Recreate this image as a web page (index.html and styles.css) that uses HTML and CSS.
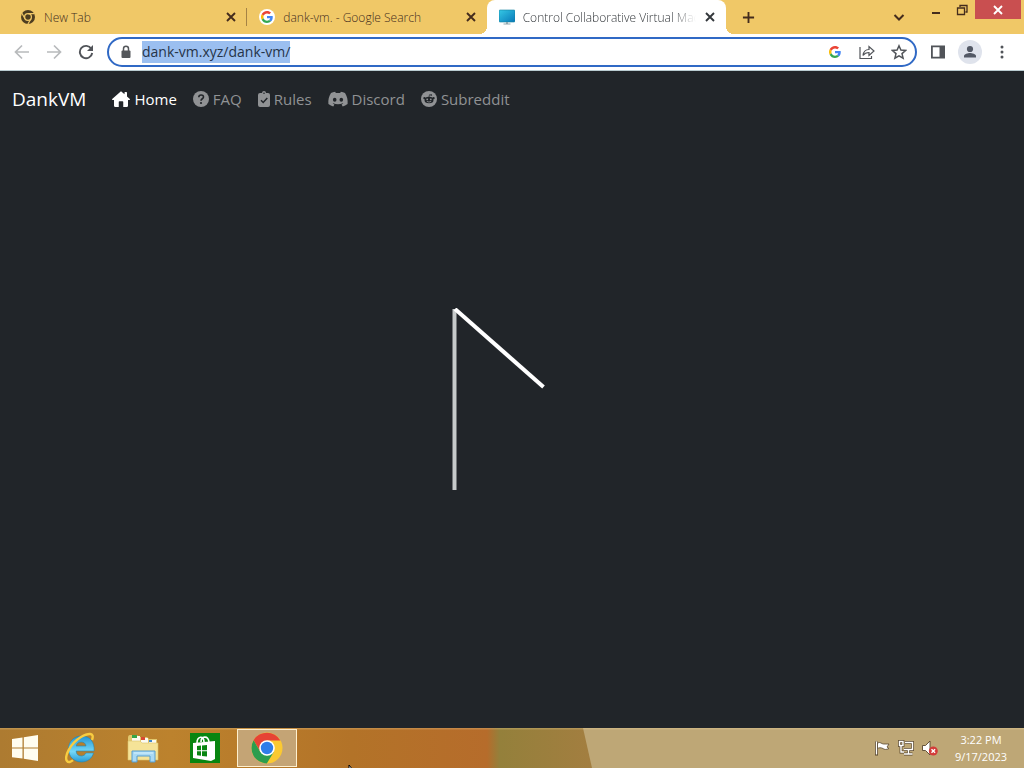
FILE: index.html
```
<!DOCTYPE html>
<html lang="en">
<head>
<meta charset="utf-8">
<title>Control Collaborative Virtual Machines</title>
<link rel="stylesheet" href="styles.css">
</head>
<body>
<svg class="defs" width="0" height="0" aria-hidden="true">
  <symbol id="google" viewBox="0 0 48 48">
    <path fill="#ea4335" d="M24 9.500c3.500 0 6.700 1.200 9.200 3.600l6.900-6.900C35.900 2.400 30.500 0 24 0 14.600 0 6.500 5.400 2.600 13.200l8 6.200C12.400 13.700 17.700 9.500 24 9.500z"/>
    <path fill="#4285f4" d="M47 24.600c0-1.600-.2-3.100-.4-4.600H24v9h12.900c-.6 3-2.300 5.500-4.700 7.200l7.700 6C44.400 38 47 31.800 47 24.600z"/>
    <path fill="#fbbc05" d="M10.500 28.600A14.500 14.500 0 0 1 10.500 19.400l-7.900-6.200a24 24 0 0 0 0 21.600z"/>
    <path fill="#34a853" d="M24 48c6.500 0 11.900-2.100 15.900-5.800l-7.700-6c-2.200 1.500-4.900 2.300-8.200 2.300-6.300 0-11.600-4.200-13.500-9.900l-7.900 6.200C6.500 42.600 14.600 48 24 48z"/>
  </symbol>
  <symbol id="close" viewBox="0 0 12 12"><path d="M2 2l8 8M10 2l-8 8" fill="none" stroke="currentColor" stroke-width="1.900"/></symbol>
</svg>
<div class="window">
  <header class="tabstrip">
    <div class="tabs">
      <div class="tab tab-first">
        <svg class="favicon" viewBox="0 0 16 16"><circle cx="8" cy="8" r="7" fill="#4d3d20"/><circle cx="8" cy="8" r="3.400" fill="#4d3d20" stroke="#f0c867" stroke-width="1.300"/><path d="M8 4.600h6.300M5 9.700L1.900 4.300M11 9.700L7.900 15" stroke="#f0c867" stroke-width="1.200"/></svg>
        <span class="tab-title">New Tab</span>
        <button class="tab-close" aria-label="Close New Tab"><svg><use href="#close"/></svg></button>
      </div>
      <div class="tab">
        <span class="favicon favicon-round"><svg><use href="#google"/></svg></span>
        <span class="tab-title">dank-vm. - Google Search</span>
        <button class="tab-close" aria-label="Close Google Search"><svg><use href="#close"/></svg></button>
      </div>
      <div class="tab tab-active">
        <svg class="favicon" viewBox="0 0 16 16"><defs><linearGradient id="screen" x2="1" y2="1"><stop stop-color="#35c8e5"/><stop offset="1" stop-color="#0878b8"/></linearGradient></defs><rect y="1" width="16" height="12" rx="1" fill="url(#screen)" stroke="#137f9d" stroke-width=".6"/><path d="M7 13h2v1.500H7zM4.500 14.500h7v1h-7z" fill="#8fa6ad"/></svg>
        <span class="tab-title">Control Collaborative Virtual Machines</span>
        <button class="tab-close" aria-label="Close DankVM"><svg><use href="#close"/></svg></button>
      </div>
    </div>
    <button class="new-tab" aria-label="New tab"><svg viewBox="0 0 14 14"><path d="M7 1v12M1 7h12" stroke="currentColor" stroke-width="2"/></svg></button>
    <div class="window-controls">
      <button class="tab-search" aria-label="Search tabs"><svg viewBox="0 0 12 12"><path d="M1.500 4L6 8.500 10.500 4" fill="none" stroke="currentColor" stroke-width="2"/></svg></button>
      <button class="win-btn" aria-label="Minimize"><svg viewBox="0 0 12 12"><path d="M2 9h8" stroke="currentColor" stroke-width="2"/></svg></button>
      <button class="win-btn" aria-label="Restore"><svg viewBox="0 0 12 12"><path d="M1.500 4h7v6.500h-7zM1 4.200h8M4 3V1.500h7V8H9.500" fill="none" stroke="currentColor" stroke-width="1.300"/></svg></button>
      <button class="win-close" aria-label="Close window"><svg><use href="#close"/></svg></button>
    </div>
  </header>

  <div class="toolbar">
    <button class="tool muted" aria-label="Back"><svg viewBox="0 0 16 16"><path d="M15 8H2M8 1.500L1.500 8 8 14.500" fill="none" stroke="currentColor" stroke-width="1.700"/></svg></button>
    <button class="tool muted" aria-label="Forward"><svg viewBox="0 0 16 16"><path d="M1 8h13M8 1.500L14.500 8 8 14.500" fill="none" stroke="currentColor" stroke-width="1.700"/></svg></button>
    <button class="tool" aria-label="Reload"><svg viewBox="0 0 16 16"><path d="M13.300 4.700A6.200 6.200 0 1 0 14.200 9" fill="none" stroke="currentColor" stroke-width="1.900"/><path d="M15 1v6H9z" fill="currentColor"/></svg></button>
    <div class="omnibox">
      <svg class="lock" viewBox="0 0 12 14"><path d="M3.500 6V3.800a2.500 2.500 0 0 1 5 0V6" fill="none" stroke="#54575b" stroke-width="1.500"/><rect x="1.500" y="5.500" width="9" height="7.500" rx="1" fill="#54575b"/></svg>
      <input class="url" type="text" aria-label="Address" value="dank-vm.xyz/dank-vm/" autofocus>
      <button class="tool" aria-label="Search with Google"><svg class="google-small"><use href="#google"/></svg></button>
      <button class="tool" aria-label="Share"><svg viewBox="0 0 16 16" fill="none" stroke="currentColor" stroke-width="1.200"><path d="M1 3v11.500h11.500V12M4 11.500c.5-4 2.500-6 6-6V2.500L15 7l-5 4.500V8.500c-2.800 0-4.500.9-6 3z"/></svg></button>
      <button class="tool" aria-label="Bookmark"><svg viewBox="0 0 16 16"><path d="M8 1.800l1.900 4.300 4.700.4-3.600 3.100 1.100 4.600L8 11.800l-4.100 2.400L5 9.600 1.400 6.500l4.700-.4z" fill="none" stroke="currentColor" stroke-width="1.500"/></svg></button>
    </div>
    <button class="tool" aria-label="Side panel"><svg viewBox="0 0 16 16"><path d="M1.900 2.400h12.200v11.200H1.900z" fill="none" stroke="currentColor" stroke-width="1.800"/><path d="M9.500 2h5v12h-5z" fill="currentColor"/></svg></button>
    <button class="tool profile" aria-label="Profile"><svg viewBox="0 0 16 16" fill="#535966"><circle cx="8" cy="5" r="3.100"/><path d="M2 13.500v-1.500c0-2 4-3 6-3s6 1 6 3v1.500z"/></svg></button>
    <button class="tool" aria-label="Menu"><svg viewBox="0 0 16 16" fill="currentColor"><circle cx="8" cy="3" r="1.500"/><circle cx="8" cy="8" r="1.500"/><circle cx="8" cy="13" r="1.500"/></svg></button>
  </div>

  <div class="page">
    <nav class="navbar">
      <a class="brand" href="#">DankVM</a>
      <a class="nav-link active" href="#"><svg class="icon-wide" viewBox="0 0 576 512"><path fill="currentColor" d="M288 10L5 256q-8 12 0 22 8 12 27 10h32v180q0 44 44 44h108V352q0-24 24-24h96q24 0 24 24v160h108q44 0 44-44V288h32q19 2 27-10 8-10 0-22L480 176V55q0-23-23-23h-35q-22 0-22 23v50z"/></svg>Home</a>
      <a class="nav-link" href="#"><svg viewBox="0 0 16 16"><circle cx="8" cy="8" r="8" fill="currentColor"/><path d="M5.800 6.200c0-3 4.700-2.900 4.700-.2C10.500 7.800 8 7.700 8 9.700" fill="none" stroke="#212529" stroke-width="1.600"/><circle cx="8" cy="12" r="1.100" fill="#212529"/></svg>FAQ</a>
      <a class="nav-link" href="#"><svg class="icon-narrow" viewBox="0 0 12 16"><path fill="currentColor" d="M2 2h2a2 2 0 0 1 4 0h2q2 0 2 2v10q0 2-2 2H2q-2 0-2-2V4q0-2 2-2z"/><circle cx="6" cy="2.300" r=".8" fill="#212529"/><path d="M3 9.300l2.200 2.200L9.300 7" fill="none" stroke="#212529" stroke-width="1.500"/></svg>Rules</a>
      <a class="nav-link" href="#"><svg class="icon-discord" viewBox="0 0 20 16"><path fill="currentColor" d="M7.200.8C5.500 1 4.300 1.400 3 2 1 5.200 0 8.700.4 13c1.700 1.200 3.200 1.900 4.900 2.400l1.100-1.900-1.700-.9.500-.4c3 1.400 6.600 1.400 9.600 0l.5.4-1.700.9 1.100 1.900c1.700-.5 3.200-1.200 4.900-2.400.4-4.300-.6-7.800-2.600-11-1.300-.6-2.500-1-4.200-1.200l-.6 1.300a15 15 0 0 0-4.400 0z"/><ellipse cx="6.700" cy="8.700" rx="1.800" ry="2" fill="#212529"/><ellipse cx="13.300" cy="8.700" rx="1.800" ry="2" fill="#212529"/></svg>Discord</a>
      <a class="nav-link" href="#"><svg viewBox="0 0 16 16"><circle cx="8" cy="8" r="8" fill="currentColor"/><g fill="#212529"><ellipse cx="8" cy="9" rx="4.500" ry="3.200"/><circle cx="3.400" cy="7.200" r="1.100"/><circle cx="12.600" cy="7.200" r="1.100"/><circle cx="10.300" cy="4" r=".8"/></g><path d="M8 6l.5-2.300 1.800.4" fill="none" stroke="#212529" stroke-width=".7"/><path d="M5.800 10.300q2.200 1.500 4.400 0" fill="none" stroke="currentColor" stroke-width=".8"/><circle cx="6.200" cy="8.300" r=".9" fill="currentColor"/><circle cx="9.800" cy="8.300" r=".9" fill="currentColor"/></svg>Subreddit</a>
    </nav>
    <main class="stage">
      <svg class="loader" viewBox="0 0 180 240" role="img" aria-label="Loading"><path d="M32.500 1v181" stroke="#c6caca" stroke-width="4"/><path d="M33 1l88.500 78" stroke="#fff" stroke-width="4"/></svg>
    </main>
  </div>

  <footer class="taskbar">
    <svg class="wallpaper" viewBox="0 0 1024 40" preserveAspectRatio="none" aria-hidden="true"><defs><linearGradient id="wood"><stop stop-color="#ad7b31"/><stop offset=".35" stop-color="#bc822d"/><stop offset=".72" stop-color="#b37328"/><stop offset="1" stop-color="#b66c2b"/></linearGradient><linearGradient id="olive"><stop stop-color="#b66c2b"/><stop offset=".12" stop-color="#94803b"/><stop offset="1" stop-color="#a37e40"/></linearGradient></defs><path fill="url(#wood)" d="M0 0h488v40H0z"/><path fill="url(#olive)" d="M487 0h105v40H487z"/><path fill="#bea776" d="M583 0h441v40H592z"/><path fill="#ffe6ad" opacity=".22" d="M0 0h1024v1.500H0z"/></svg>
    <button class="task start" aria-label="Start"><svg viewBox="0 0 28 28" fill="#fffdf0"><path d="M1 5l10.500-1.600v10H1zM12.800 3.200L27 1v12.400H12.800zM1 14.600h10.500v10L1 23.200zM12.800 14.600H27V27l-14.200-2.200z"/></svg></button>
    <button class="task" aria-label="Internet Explorer"><svg viewBox="0 0 32 32"><defs><linearGradient id="ie" x2="0" y2="1"><stop stop-color="#2494d3"/><stop offset=".6" stop-color="#74d8f8"/><stop offset="1" stop-color="#2699d3"/></linearGradient></defs><path fill="url(#ie)" stroke="#2187b4" stroke-width=".6" d="M16.500 4C9 4 3.500 9.500 3.500 17S9 30 16.500 30c6 0 10.500-3.500 12-9h-7.500c-1 2-2.500 3-4.700 3-3 0-5-1.800-5.200-5h18C29.700 10 25 4 16.500 4zM11.200 14c.5-2.700 2.300-4 5-4 2.600 0 4.500 1.300 4.800 4z"/><path fill="none" stroke="#f8cc40" stroke-width="2.400" d="M27 8c3-8-4-7-11-3C5 11.500-1 25 2 29c1.300 1.800 4 1 6-.8"/></svg></button>
    <button class="task" aria-label="File Explorer"><svg viewBox="0 0 32 32"><path fill="#e1c86e" d="M1 6q0-3 2-3h7l2 2h8l2 2h8v20H1z"/><path fill="#fbfaf0" d="M5 4h8v6H5zM14 6h7v5h-7zM22 8h7v4h-7z"/><path fill="#36a548" d="M5 3h5v3H5z"/><path fill="#d94832" d="M14 5h4v3h-4z"/><path fill="#4087ca" d="M22 8h3v2h-3z"/><path fill="#f5e398" stroke="#dac26b" stroke-width=".6" d="M1 9h12l2 2h16v17H1z"/><path fill="#a9d9f4" stroke="#579dce" d="M5 19h23v11h-5v-6H10v6H5z"/><path stroke="#d6f2ff" d="M7 21h19"/></svg></button>
    <button class="task" aria-label="Store"><svg viewBox="0 0 32 32"><path fill="#088510" d="M1 1h30v30H1z"/><path fill="none" stroke="#fff" stroke-width="1.600" d="M8 11c0-7 7-8 7-1M12 10c0-6 7-7 8 0"/><path fill="#fff" d="M4 11l22-2v18l-4 2-18-3z"/><path fill="#088510" d="M8 14l4-.4v4.600H8zM13 13.500l5-.5v5.200h-5zM8 19.200h4v4.600l-4-.5zM13 19.200h5v5.400l-5-.6z"/></svg></button>
    <button class="task task-active" aria-label="Google Chrome"><svg viewBox="0 0 32 32"><circle cx="16" cy="16" r="15.500" fill="#fbc932"/><path fill="#e64335" d="M2.600 8.200A15.500 15.500 0 0 1 29.400 8.500H16L9 19z"/><path fill="#2b9d4e" d="M2.600 8.200A15.500 15.500 0 0 0 15.800 31.500L22.800 20 16 23.500 9.300 19.800z"/><circle cx="16" cy="16" r="7.800" fill="#fff"/><circle cx="16" cy="16" r="6.200" fill="#2f7de8"/></svg></button>
    <div class="tray">
      <svg viewBox="0 0 16 16"><path d="M2.500 1.500v14" stroke="#57452c" stroke-width="3"/><path d="M2.500 1.500v13" stroke="#fff" stroke-width="1.400"/><path d="M3.500 3c3-1.500 4 1 6 1h5.500l-2 3 2 1.500c-3 1.500-5 1-6 0-2-1-4-1-5.500 0z" fill="#fff" stroke="#57452c" stroke-width=".8"/></svg>
      <svg viewBox="0 0 16 16" fill="none"><g stroke="#57452c" stroke-width="2.800"><path d="M7 2.500h7.500v7H6M10.500 10v4M6 14h8.500M1.500 1.500h3.500v4H1.500zM3 6v6h3"/></g><g stroke="#fff" stroke-width="1.400"><path d="M7 2.500h7.500v7H6M10.500 10v4M6 14h8.500M1.500 1.500h3.500v4H1.500zM3 6v6h3"/></g></svg>
      <svg viewBox="0 0 16 16"><path d="M.5 5.500h3L8 1v14l-4.500-4.500h-3z" fill="#fff" stroke="#57452c" stroke-width=".9"/><circle cx="11.300" cy="11" r="4.500" fill="#d33b39"/><path d="M9.500 9.200l3.600 3.600m0-3.600l-3.600 3.600" stroke="#fff" stroke-width="1.400"/></svg>
    </div>
    <div class="clock"><span>3:22 PM</span><span>9/17/2023</span></div>
    <svg class="cursor" viewBox="0 0 8 12" aria-hidden="true"><path d="M1 1v10l2.500-2.500H7z" fill="#fff" stroke="#000"/></svg>
  </footer>
</div>
<script src="main.js"></script>
</body>
</html>
```

FILE: main.js
```
const address = document.querySelector(".url");
address.focus();
address.select();
```

FILE: styles.css
```
* { box-sizing: border-box; }
body { margin: 0; font-family: "Open Sans", "Noto Sans", sans-serif; }
button { border: 0; padding: 0; background: none; color: inherit; display: flex; align-items: center; justify-content: center; flex: none; }
svg { display: block; flex: none; }
.defs { position: absolute; }
.window { display: flex; flex-direction: column; height: 100vh; overflow: hidden; }

.tabstrip { display: flex; height: 34px; flex: none; background: #f0c867; color: #442c1d; }
.tabs { display: flex; flex: 0 1 718px; min-width: 0; margin-left: 8px; }
.tab { display: flex; align-items: center; flex: 1; min-width: 0; gap: 8px; padding: 0 10px 0 12px; font-size: 12px; font-weight: 300; }
.tab-first { background: linear-gradient(#a58345, #a58345) right center / 1px 18px no-repeat; }
.tab-active { background: #fff; border-radius: 8px 8px 0 0; color: #33373b; position: relative; }
.tab-active::before, .tab-active::after { content: ""; position: absolute; bottom: 0; width: 8px; height: 8px; }
.tab-active::before { right: 100%; background: radial-gradient(circle at 0 0, transparent 8px, #fff 8px); }
.tab-active::after { left: 100%; background: radial-gradient(circle at 100% 0, transparent 8px, #fff 8px); }
.favicon { width: 16px; height: 16px; flex: none; }
.favicon-round { display: flex; align-items: center; justify-content: center; background: #fff; border-radius: 50%; }
.favicon-round svg { width: 12px; height: 12px; }
.tab-title { flex: 1; min-width: 0; overflow: hidden; white-space: nowrap; }
.tab-active .tab-title { mask-image: linear-gradient(to right, #000 86%, transparent); }
.tab-close svg { width: 12px; height: 12px; }
.new-tab { width: 28px; margin-left: 8px; }
.new-tab svg { width: 13px; height: 13px; }
.window-controls { display: flex; align-items: flex-start; margin: 0 3px 0 auto; }
.tab-search { width: 24px; height: 34px; margin-right: 12px; }
.tab-search svg { width: 12px; height: 12px; }
.win-btn { width: 26px; height: 19px; }
.win-btn svg { width: 12px; height: 12px; }
.win-close { width: 46px; height: 19px; background: #c94f50; color: #fff; }
.win-close svg { width: 12px; height: 12px; }

.toolbar { display: flex; align-items: center; gap: 8px; flex: none; height: 37px; padding: 0 10px; background: #fff; border-bottom: 1px solid #b9cbd0; color: #515459; }
.tool { width: 24px; height: 24px; }
.tool svg { width: 16px; height: 16px; }
.muted { color: #b8babc; }
.omnibox { display: flex; align-items: center; gap: 8px; flex: 1; min-width: 0; height: 30px; margin: 0 1px; padding: 0 4px 0 11px; border: 2px solid #3069c5; border-radius: 16px; }
.lock { width: 12px; height: 14px; }
.url { flex: 1; min-width: 0; border: 0; outline: 0; padding: 0; margin-left: 2px; background: none; color: #263448; font: 14px/22px "Open Sans", "Noto Sans", sans-serif; }
.url::selection { background: #9bbff0; color: #263448; }
.tool .google-small { width: 12px; height: 12px; }
.profile { border-radius: 50%; background: #dfe3ec; }
.profile svg { width: 16px; height: 16px; }

.page { display: flex; flex-direction: column; flex: 1; min-height: 0; background: #212529; }
.navbar { display: flex; align-items: center; gap: 16px; height: 56px; padding: 0 12px; color: #909294; font-size: 15px; }
.navbar a { color: inherit; text-decoration: none; }
.navbar .brand { color: #fff; font-size: 19px; margin-right: 10px; }
.nav-link { display: flex; align-items: center; gap: 4px; }
.navbar .active { color: #fff; }
.nav-link svg { width: 16px; height: 16px; }
.nav-link .icon-wide { width: 18px; }
.nav-link .icon-narrow { width: 12px; }
.nav-link .icon-discord { width: 20px; }
.stage { display: flex; align-items: center; justify-content: center; flex: 1; min-height: 0; }
.loader { width: 180px; height: 240px; }

.taskbar { display: flex; align-items: center; flex: none; height: 40px; position: relative; isolation: isolate; overflow: hidden; }
.wallpaper { position: absolute; inset: 0; width: 100%; height: 100%; z-index: -1; }
.task { width: 60px; height: 38px; margin-right: 2px; }
.task svg { width: 32px; height: 32px; }
.start { width: 50px; margin-right: 1px; }
.start svg { width: 28px; height: 28px; }
.task-active { border: 1px solid #fff0ce; background: #c4a475; }
.tray { display: flex; gap: 8px; margin-left: auto; }
.tray svg { width: 16px; height: 16px; }
.clock { display: flex; flex-direction: column; align-items: center; width: 86px; color: #fff; font-size: 11px; line-height: 17px; }
.cursor { position: absolute; left: 34%; top: 36px; width: 8px; height: 12px; }
```
